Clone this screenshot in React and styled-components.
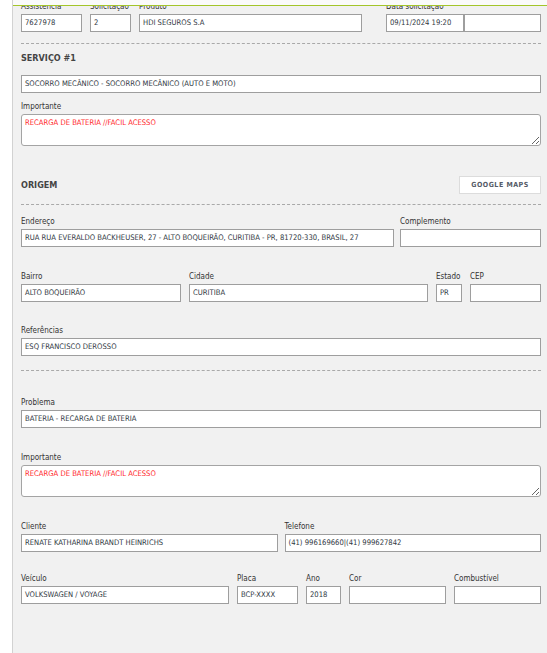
import React from 'react';
import styled, { createGlobalStyle } from 'styled-components';

const GlobalStyle = createGlobalStyle`
    html, body {
        margin: 0;
        padding: 0;
        background: #ffffff;
    }
    body {
        font-family: "DejaVu Sans Condensed", "DejaVu Sans", sans-serif;
        color: #333;
    }
    * {
        box-sizing: border-box;
    }
`;

const Page = styled.div`
    display: flex;
    min-height: 100vh;
    overflow: hidden;
`;

const Gutter = styled.div`
    width: 13px;
    flex: none;
    background: #ffffff;
    border-right: 1px solid #d2d2d2;
`;

const Panel = styled.div`
    position: relative;
    flex: 1;
    background: #f1f1f1;
    padding: 0 6px 40px 8px;
`;

const TopBar = styled.div`
    position: absolute;
    top: 0;
    left: 0;
    right: 0;
    height: 6px;
    background: #fafafa;
    border-bottom: 1px solid #a3c52a;
    z-index: 2;
`;

const Row = styled.div`
    display: grid;
    grid-template-columns: ${(p) => p.$cols || '1fr'};
    column-gap: ${(p) => p.$gap || '8px'};
    margin-top: ${(p) => p.$mt || '0px'};
`;

const Field = styled.div`
    display: flex;
    flex-direction: column;
    min-width: 0;
    margin-top: ${(p) => p.$mt || '0px'};
`;

const Label = styled.label`
    font-size: 8px;
    line-height: 13px;
    margin-bottom: 1px;
    color: #333;
    white-space: nowrap;
`;

const Input = styled.div`
    height: 18px;
    background: #ffffff;
    border: 1px solid #9e9e9e;
    padding: 0 3px;
    font-size: 7.6px;
    line-height: 16px;
    color: #2f3742;
    white-space: nowrap;
    overflow: hidden;
`;

const Pair = styled.div`
    display: grid;
    grid-template-columns: 1fr 1fr;
`;

const TextArea = styled.textarea`
    display: block;
    width: 100%;
    height: 32px;
    margin: 0;
    background: #ffffff;
    border: 1px solid #a4a4a4;
    border-radius: 3px;
    padding: 3px 3px;
    font-family: inherit;
    font-size: 7.6px;
    line-height: 10px;
    color: #ff1f2a;
    outline: none;
`;

const Divider = styled.hr`
    border: 0;
    border-top: 1px dashed #a9a9a9;
    margin: ${(p) => p.$mt || '10px'} 0 0 0;
    height: 0;
`;

const Title = styled.h3`
    margin: ${(p) => p.$mt || '0px'} 0 0 0;
    font-size: 9px;
    line-height: 14px;
    font-weight: bold;
    color: #444;
`;

const SectionHead = styled.div`
    display: flex;
    align-items: center;
    justify-content: space-between;
    height: 18px;
    margin-top: ${(p) => p.$mt || '0px'};
`;

const MapsButton = styled.button`
    width: 82px;
    height: 18px;
    background: #ffffff;
    border: 1px solid #dcdcdc;
    font-family: inherit;
    font-size: 7px;
    font-weight: bold;
    letter-spacing: 0.5px;
    color: #545a66;
    padding: 0;
    cursor: pointer;
`;

const Empty = styled.div``;

const App = () => {
    return (
        <>
            <GlobalStyle />
            <Page>
                <Gutter />
                <Panel>
                    <TopBar />

                    <Row $cols="61px 41px 223px 1fr 155px">
                        <Field>
                            <Label>Assistência</Label>
                            <Input>7627978</Input>
                        </Field>
                        <Field>
                            <Label>Solicitação</Label>
                            <Input>2</Input>
                        </Field>
                        <Field>
                            <Label>Produto</Label>
                            <Input>HDI SEGUROS S.A</Input>
                        </Field>
                        <Empty />
                        <Field>
                            <Label>Data solicitação</Label>
                            <Pair>
                                <Input>09/11/2024 19:20</Input>
                                <Input />
                            </Pair>
                        </Field>
                    </Row>

                    <Divider $mt="11px" />

                    <Title $mt="7px">SERVIÇO #1</Title>
                    <Field $mt="10px">
                        <Input>SOCORRO MECÂNICO - SOCORRO MECÂNICO (AUTO E MOTO)</Input>
                    </Field>
                    <Field $mt="7px">
                        <Label>Importante</Label>
                        <TextArea readOnly defaultValue="RECARGA DE BATERIA //FACIL ACESSO" />
                    </Field>

                    <SectionHead $mt="30px">
                        <Title>ORIGEM</Title>
                        <MapsButton>GOOGLE MAPS</MapsButton>
                    </SectionHead>

                    <Divider $mt="10px" />

                    <Row $cols="1fr 141px" $gap="6px" $mt="10px">
                        <Field>
                            <Label>Endereço</Label>
                            <Input>RUA RUA EVERALDO BACKHEUSER, 27 - ALTO BOQUEIRÃO, CURITIBA - PR, 81720-330, BRASIL, 27</Input>
                        </Field>
                        <Field>
                            <Label>Complemento</Label>
                            <Input />
                        </Field>
                    </Row>

                    <Row $cols="160px 1fr 26px 71px" $gap="8px" $mt="23px">
                        <Field>
                            <Label>Bairro</Label>
                            <Input>ALTO BOQUEIRÃO</Input>
                        </Field>
                        <Field>
                            <Label>Cidade</Label>
                            <Input>CURITIBA</Input>
                        </Field>
                        <Field>
                            <Label>Estado</Label>
                            <Input>PR</Input>
                        </Field>
                        <Field>
                            <Label>CEP</Label>
                            <Input />
                        </Field>
                    </Row>

                    <Field $mt="22px">
                        <Label>Referências</Label>
                        <Input>ESQ FRANCISCO DEROSSO</Input>
                    </Field>

                    <Divider $mt="14px" />

                    <Field $mt="25px">
                        <Label>Problema</Label>
                        <Input>BATERIA - RECARGA DE BATERIA</Input>
                    </Field>

                    <Field $mt="23px">
                        <Label>Importante</Label>
                        <TextArea readOnly defaultValue="RECARGA DE BATERIA //FACIL ACESSO" />
                    </Field>

                    <Row $cols="1fr 1fr" $gap="7px" $mt="23px">
                        <Field>
                            <Label>Cliente</Label>
                            <Input>RENATE KATHARINA BRANDT HEINRICHS</Input>
                        </Field>
                        <Field>
                            <Label>Telefone</Label>
                            <Input>(41) 996169660|(41) 999627842</Input>
                        </Field>
                    </Row>

                    <Row $cols="208px 61px 35px 97px 1fr" $gap="8px" $mt="20px">
                        <Field>
                            <Label>Veículo</Label>
                            <Input>VOLKSWAGEN / VOYAGE</Input>
                        </Field>
                        <Field>
                            <Label>Placa</Label>
                            <Input>BCP-XXXX</Input>
                        </Field>
                        <Field>
                            <Label>Ano</Label>
                            <Input>2018</Input>
                        </Field>
                        <Field>
                            <Label>Cor</Label>
                            <Input />
                        </Field>
                        <Field>
                            <Label>Combustível</Label>
                            <Input />
                        </Field>
                    </Row>
                </Panel>
            </Page>
        </>
    );
};

export default App;
